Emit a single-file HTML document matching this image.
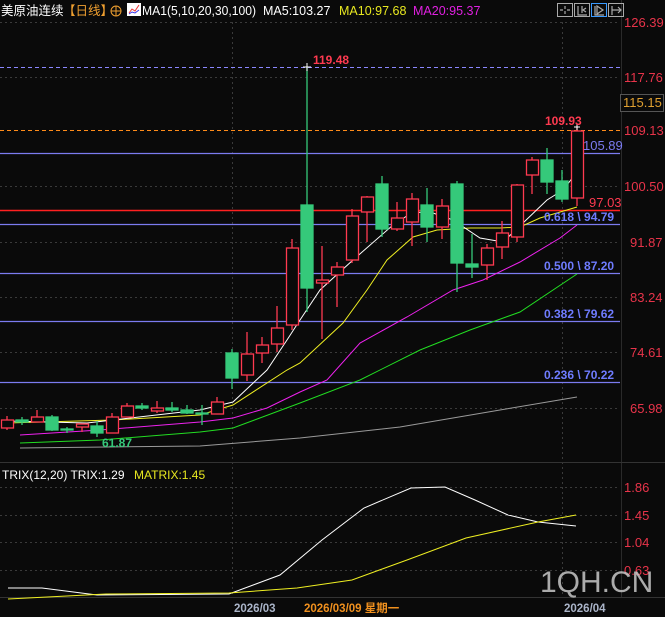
<!DOCTYPE html>
<html><head><meta charset="utf-8"><style>
body{margin:0;background:#0a0a0a;width:665px;height:617px;overflow:hidden;font-family:"Liberation Sans","Noto Sans CJK SC",sans-serif}
svg{display:block}
</style></head><body>
<svg width="665" height="617" viewBox="0 0 665 617" xmlns="http://www.w3.org/2000/svg" font-family="Liberation Sans, Noto Sans CJK SC, sans-serif">
<rect width="665" height="617" fill="#0a0a0a"/>
<g stroke="#3a3a3a" stroke-dasharray="2,3" stroke-width="1">
<line x1="0" y1="22.5" x2="620" y2="22.5"/><line x1="0" y1="77.5" x2="620" y2="77.5"/>
<line x1="0" y1="186.5" x2="620" y2="186.5"/><line x1="0" y1="242.5" x2="620" y2="242.5"/>
<line x1="0" y1="297.5" x2="620" y2="297.5"/><line x1="0" y1="352.5" x2="620" y2="352.5"/>
<line x1="0" y1="408.5" x2="620" y2="408.5"/>
<line x1="0" y1="487.5" x2="620" y2="487.5"/><line x1="0" y1="515.5" x2="620" y2="515.5"/>
<line x1="0" y1="542.5" x2="620" y2="542.5"/><line x1="0" y1="570.5" x2="620" y2="570.5"/>
<line x1="232.5" y1="22" x2="232.5" y2="597"/><line x1="562.5" y1="22" x2="562.5" y2="597"/>
</g>
<line x1="621.5" y1="0" x2="621.5" y2="597" stroke="#2a2a2a"/>
<line x1="0" y1="462.5" x2="665" y2="462.5" stroke="#333"/>
<line x1="0" y1="597.5" x2="665" y2="597.5" stroke="#333"/>
<line x1="0" y1="67.5" x2="620" y2="67.5" stroke="#8a86ff" stroke-dasharray="4,3"/>
<line x1="0" y1="130.5" x2="620" y2="130.5" stroke="#ff8c1a" stroke-dasharray="4,3"/>
<g stroke="#7b7bf0" stroke-width="1.2">
<line x1="0" y1="153.5" x2="620" y2="153.5"/><line x1="0" y1="224.5" x2="620" y2="224.5"/>
<line x1="0" y1="273.5" x2="620" y2="273.5"/><line x1="0" y1="321.5" x2="620" y2="321.5"/>
<line x1="0" y1="382.5" x2="620" y2="382.5"/></g>
<line x1="0" y1="210.5" x2="620" y2="210.5" stroke="#ff2020" stroke-width="1.5"/>
<g fill="none" stroke-width="1">
<polyline stroke="#9a9a9a" points="20,448 200,446 300,438 400,427 500,410 577,397"/>
<polyline stroke="#22dd22" points="20,443 100,440 200,432 233,428 300,403 360,380 420,350 470,330 520,312 577,274"/>
<polyline stroke="#ee22ee" points="20,435 100,430 200,422 233,418 267,408 300,392 327,380 360,343 407,317 453,290 483,280 520,262 560,238 577,225"/>
<polyline stroke="#eeee22" points="7,423 113,420 200,415 233,405 287,370 300,363 343,323 367,290 387,260 413,237 437,230 470,228 500,228 520,227 540,218 577,207"/>
<polyline stroke="#ffffff" points="7,421 87,423 200,410 233,402 267,370 287,340 298,323 320,290 353,260 393,225 413,212 433,213 453,220 480,238 503,242 523,223 547,200 563,190 577,172"/>
</g>
<g stroke-width="1.3">
<g stroke="#ff3a50" fill="#0a0a0a">
<line x1="7" y1="416" x2="7" y2="430"/><rect x="1.5" y="420" width="12" height="8"/>
<line x1="37" y1="410" x2="37" y2="422"/><rect x="31.5" y="417" width="12" height="5"/>
<line x1="82" y1="424" x2="82" y2="432"/><rect x="76.5" y="424" width="12" height="3"/>
<line x1="112" y1="413" x2="112" y2="433"/><rect x="106.5" y="417" width="12" height="16"/>
<line x1="127" y1="403" x2="127" y2="417"/><rect x="121.5" y="406" width="12" height="11"/>
<line x1="157" y1="401" x2="157" y2="413"/><rect x="151.5" y="408" width="12" height="3"/>
<line x1="217" y1="397" x2="217" y2="414"/><rect x="211.5" y="402" width="12" height="12"/>
<line x1="247" y1="332" x2="247" y2="381"/><rect x="241.5" y="354" width="12" height="21"/>
<line x1="262" y1="337" x2="262" y2="363"/><rect x="256.5" y="345" width="12" height="8"/>
<line x1="277" y1="306" x2="277" y2="352"/><rect x="271.5" y="328" width="12" height="16"/>
<line x1="292" y1="239" x2="292" y2="330"/><rect x="286.5" y="248" width="12" height="77"/>
<line x1="322" y1="246" x2="322" y2="339"/><rect x="316.5" y="280" width="12" height="3"/>
<line x1="337" y1="262" x2="337" y2="307"/><rect x="331.5" y="267" width="12" height="8"/>
<line x1="352" y1="209" x2="352" y2="263"/><rect x="346.5" y="216" width="12" height="44"/>
<line x1="367" y1="196" x2="367" y2="242"/><rect x="361.5" y="197" width="12" height="15"/>
<line x1="397" y1="202" x2="397" y2="231"/><rect x="391.5" y="218" width="12" height="11"/>
<line x1="412" y1="193" x2="412" y2="246"/><rect x="406.5" y="199" width="12" height="23"/>
<line x1="442" y1="199" x2="442" y2="239"/><rect x="436.5" y="206" width="12" height="21"/>
<line x1="487" y1="244" x2="487" y2="280"/><rect x="481.5" y="248" width="12" height="17"/>
<line x1="502" y1="221" x2="502" y2="259"/><rect x="496.5" y="233" width="12" height="14"/>
<line x1="517" y1="184" x2="517" y2="242"/><rect x="511.5" y="185" width="12" height="52"/>
<line x1="532" y1="157" x2="532" y2="194"/><rect x="526.5" y="160" width="12" height="15"/>
<line x1="577" y1="127" x2="577" y2="206"/><rect x="571.5" y="131" width="12" height="67"/>
</g>
<g stroke="#35c97a" fill="#35c97a">
<line x1="22" y1="417" x2="22" y2="425"/><rect x="16" y="420" width="12" height="2"/>
<line x1="52" y1="415" x2="52" y2="431"/><rect x="46" y="417" width="12" height="13"/>
<line x1="67" y1="427" x2="67" y2="433"/><rect x="61" y="429" width="12" height="1"/>
<line x1="97" y1="421" x2="97" y2="437"/><rect x="91" y="426" width="12" height="7"/>
<line x1="142" y1="403" x2="142" y2="410"/><rect x="136" y="406" width="12" height="2"/>
<line x1="172" y1="402" x2="172" y2="412"/><rect x="166" y="408" width="12" height="2"/>
<line x1="187" y1="405" x2="187" y2="414"/><rect x="181" y="410" width="12" height="3"/>
<line x1="202" y1="405" x2="202" y2="425"/><rect x="196" y="413" width="12" height="1"/>
<line x1="232" y1="349" x2="232" y2="389"/><rect x="226" y="353" width="12" height="25"/>
<line x1="307" y1="67" x2="307" y2="312"/><rect x="301" y="205" width="12" height="83"/>
<line x1="382" y1="176" x2="382" y2="237"/><rect x="376" y="184" width="12" height="45"/>
<line x1="427" y1="188" x2="427" y2="242"/><rect x="421" y="205" width="12" height="22"/>
<line x1="457" y1="181" x2="457" y2="292"/><rect x="451" y="184" width="12" height="79"/>
<line x1="472" y1="234" x2="472" y2="278"/><rect x="466" y="264" width="12" height="3"/>
<line x1="547" y1="148" x2="547" y2="194"/><rect x="541" y="160" width="12" height="22"/>
<line x1="562" y1="170" x2="562" y2="202"/><rect x="556" y="181" width="12" height="18"/>
</g></g>
<path d="M303 67h8M307 63v8M574 127h6M577 124v6" stroke="#fff" stroke-width="1"/>
<g font-weight="bold" font-size="12">
<text x="313" y="64" fill="#ff3a50">119.48</text>
<text x="545" y="125" fill="#ff3a50">109.93</text>
<text x="583" y="150" fill="#7b7bf0" font-weight="normal" font-size="13">105.89</text>
<text x="589" y="207" fill="#ff3a50" font-weight="normal" font-size="13">97.03</text>
<text x="544" y="221" fill="#6f7cff">0.618 \ 94.79</text>
<text x="544" y="270" fill="#6f7cff">0.500 \ 87.20</text>
<text x="544" y="318" fill="#6f7cff">0.382 \ 79.62</text>
<text x="544" y="379" fill="#6f7cff">0.236 \ 70.22</text>
<text x="102" y="447" fill="#35c97a">61.87</text>
</g>
<g font-size="13" fill="#e8344a">
<text x="624" y="27">126.39</text><text x="624" y="82">117.76</text>
<text x="624" y="135">109.13</text><text x="624" y="191">100.50</text>
<text x="630" y="247">91.87</text><text x="630" y="302">83.24</text>
<text x="630" y="357">74.61</text><text x="630" y="413">65.98</text>
<text x="624" y="492">1.86</text><text x="624" y="520">1.45</text>
<text x="624" y="547">1.04</text><text x="624" y="575">0.63</text>
</g>
<rect x="620.5" y="94.5" width="43" height="17" fill="#0a0a0a" stroke="#555"/>
<text x="623" y="107" font-size="13" fill="#e0a030">115.15</text>
<g font-size="12.5">
<text x="1" y="15" fill="#fff">美原油连续</text>
<text x="63" y="15" fill="#f0a030">【日线】</text>
<circle cx="116" cy="11" r="5" fill="none" stroke="#f0a030"/><line x1="111" y1="11" x2="121" y2="11" stroke="#f0a030"/><line x1="116" y1="6" x2="116" y2="16" stroke="#f0a030"/>
<rect x="127" y="3" width="14" height="13" fill="#fff"/><path d="M129 13l3-4 3 2 4-6" stroke="#e33" fill="none"/><path d="M129 14l3-2 3 1 4-3" stroke="#33e" fill="none"/>
<text x="142" y="15" fill="#fff" textLength="114" lengthAdjust="spacingAndGlyphs">MA1(5,10,20,30,100)</text>
<text x="263" y="15" fill="#fff">MA5:103.27</text>
<text x="339" y="15" fill="#e8e820">MA10:97.68</text>
<text x="413" y="15" fill="#e020e0">MA20:95.37</text>
</g>
<g fill="none" stroke="#aaa">
<rect x="557.5" y="3.5" width="15" height="13"/><rect x="574.5" y="3.5" width="15" height="13"/>
<rect x="591.5" y="3.5" width="15" height="13" stroke="#3a9aff"/><rect x="608.5" y="3.5" width="15" height="13"/>
<path d="M565 6v3M565 11v3M560 10h3M567 10h3M578 6v9h9M582 6v7M586 8l-3 2 3 2M595 6v9h9M597 6l6 4-6 4zM612 6v9M612 10h9M618 7l3 3-3 3" stroke-width="1.2"/>
</g>
<text x="2" y="479" font-size="12" fill="#fff">TRIX(12,20) TRIX:1.29</text>
<text x="134" y="479" font-size="12" fill="#e8e820">MATRIX:1.45</text>
<polyline fill="none" stroke="#fff" points="8,588 42,588 97,595 229,594 280,575 322,540 364,508 411,488 445,487 475,500 508,515 538,522 576,526"/>
<polyline fill="none" stroke="#eeee22" points="8,599 106,594 229,593 297,588 352,580 407,560 466,538 538,522 576,515"/>
<text x="540" y="592" font-size="30" fill="#c8c8c8" opacity="0.85">1QH.CN</text>
<g font-size="11.5" font-weight="bold">
<text x="234" y="612" fill="#aab4c8">2026/03</text>
<text x="304" y="612" fill="#f0901e">2026/03/09 星期一</text>
<text x="564" y="612" fill="#aab4c8">2026/04</text>
</g>
</svg>
</body></html>
